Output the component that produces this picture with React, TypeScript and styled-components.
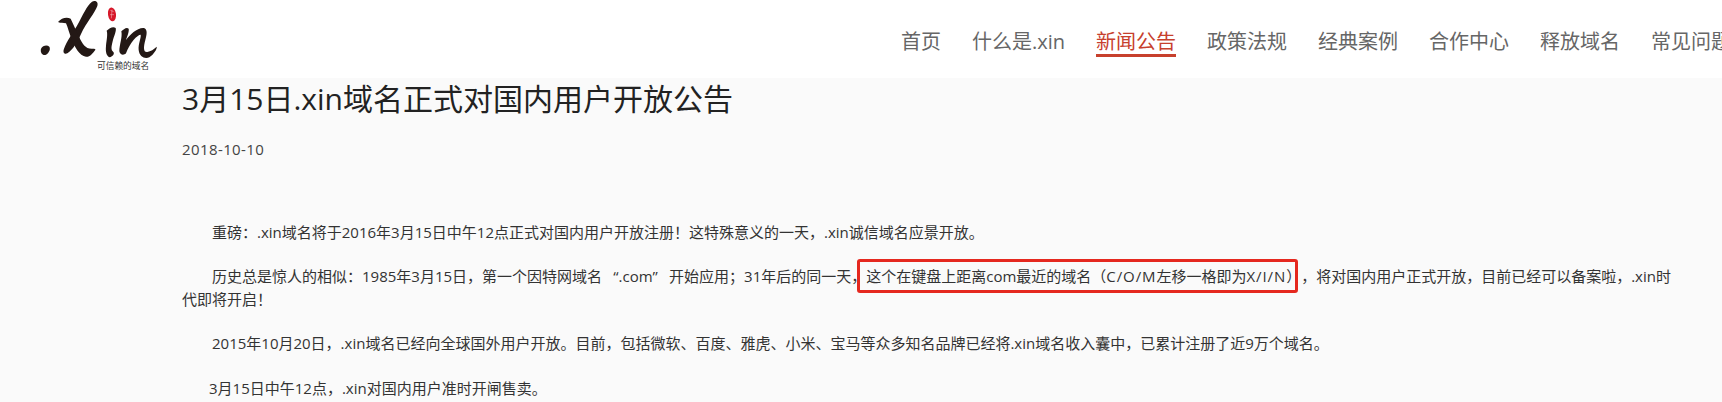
import React from "react";
import styled, { createGlobalStyle } from "styled-components";

const Global = createGlobalStyle`
  html, body { margin: 0; padding: 0; height: 402px; overflow: hidden; background: #fafafa; }
  body { font-family: "Open Sans", "Noto Sans CJK SC", sans-serif; color: #333; text-spacing-trim: space-all; }
`;
const Header = styled.header`
  height: 78px; background: #fff; display: flex; align-items: flex-start; overflow: hidden;
`;
const LogoWrap = styled.div`
  position: relative; width: 140px; height: 75px; margin-left: 30px; flex: none;
`;
const LogoSvg = styled.svg`display: block; width: 140px; height: 75px;`;
const Tagline = styled.span`
  position: absolute; left: 67px; top: 61px; font-size: 8.7px; line-height: 10px; color: #333; white-space: nowrap;
`;
const Nav = styled.nav`
  display: flex; gap: 31px; margin-left: 731px; padding-top: 29px; white-space: nowrap; flex: none;
`;
const NavItem = styled.a<{ $active?: boolean }>`
  font-size: 20px; line-height: 25px; height: 25px; font-weight: 400;
  color: ${p => (p.$active ? "#c7402d" : "#666")};
  border-bottom: ${p => (p.$active ? "3px solid #c7402d" : "none")};
`;
const Main = styled.main`
  padding: 0 45px 0 182px;
`;
const Title = styled.h1`
  margin: 0; padding-top: 1px; font-size: 30px; line-height: 40px; font-weight: 400; color: #222;
`;
const DateLine = styled.div`
  margin-top: 19px; font-size: 15px; line-height: 22.5px; color: #444; letter-spacing: 0.4px;
`;
const Body = styled.div`
  margin-top: 60px; display: flex; flex-direction: column; gap: 22px;
`;
const Para = styled.p<{ $indent?: number }>`
  margin: 0; font-size: 15px; line-height: 22.5px; color: #333;
  text-indent: ${p => p.$indent ?? 30}px;
`;
const Quote = styled.span<{ $open?: boolean }>`
  display: inline-block; width: 16.5px; text-indent: 0;
  text-align: ${p => (p.$open ? "right" : "left")};
`;
const Letters = styled.span`
  letter-spacing: 0.9px;
`;
const Marked = styled.span`
  position: relative;
  &::after {
    content: ""; position: absolute; left: -9px; right: 3px; top: -7px; bottom: -7px;
    border: 3px solid #e5281f; border-radius: 3px;
  }
`;

const INK = "#231815";

export default function App() {
  const items = ["首页", "什么是.xin", "新闻公告", "政策法规", "经典案例", "合作中心", "释放域名", "常见问题"];
  return (
    <>
      <Global />
      <Header>
        <LogoWrap>
          <LogoSvg viewBox="0 0 420 225" aria-hidden="true">
            <path fill={INK} d="M33 146 C38 136 52 134 58 140 C62 146 58 158 48 164 C38 168 30 158 33 146 Z" />
            <path fill={INK} d="M186 5 C196 0 206 6 202 18 C194 40 170 66 152 104 C142 126 130 148 112 160 C102 164 98 156 102 146 C110 124 128 100 146 68 C158 46 170 18 186 5 Z" />
            <path fill={INK} d="M84 66 C94 54 110 50 122 56 C130 72 138 92 148 112 C158 134 168 150 192 146 C196 146 198 148 194 152 C186 162 178 172 168 170 C148 168 134 140 124 116 C118 100 114 84 108 70 C100 68 92 70 84 66 Z" />
            <path fill={INK} d="M230 92 C238 84 250 78 257 84 C260 92 252 108 248 124 C244 140 242 150 250 156 C254 160 250 168 240 172 C230 170 226 156 228 138 C229 122 234 104 230 92 Z" />
            <path fill={INK} d="M274 94 C280 88 290 80 296 86 C298 94 292 108 288 120 C300 104 322 82 342 84 C354 88 350 106 346 120 C340 142 340 158 352 156 C362 154 372 148 380 140 C382 146 372 162 358 172 C344 178 328 170 326 150 C324 132 334 112 332 104 C322 104 300 128 288 160 C280 168 270 164 268 154 C268 134 278 112 274 94 Z" />
            <ellipse cx="246" cy="43" rx="12" ry="21" fill="#d7182a" transform="rotate(-8 246 43)" />
            <path d="M241 31 L251 35 M246 29 L244 55 M240 44 L252 44" stroke="#f6c9cd" strokeWidth="1.5" fill="none" />
          </LogoSvg>
          <Tagline>可信赖的域名</Tagline>
        </LogoWrap>
        <Nav>
          {items.map(t => <NavItem key={t} $active={t === "新闻公告"}>{t}</NavItem>)}
        </Nav>
      </Header>
      <Main>
        <Title>3月15日.xin域名正式对国内用户开放公告</Title>
        <DateLine>2018-10-10</DateLine>
        <Body>
          <Para>重磅：.xin域名将于2016年3月15日中午12点正式对国内用户开放注册！这特殊意义的一天，.xin诚信域名应景开放。</Para>
          <Para>历史总是惊人的相似：1985年3月15日，第一个因特网域名<Quote $open>“</Quote>.com<Quote>”</Quote>开始应用；31年后的同一天，<Marked>这个在键盘上距离com最近的域名（<Letters>C/O/M</Letters>左移一格即为<Letters>X/I/N</Letters>）</Marked>，将对国内用户正式开放，目前已经可以备案啦，.xin时代即将开启！</Para>
          <Para>2015年10月20日，.xin域名已经向全球国外用户开放。目前，包括微软、百度、雅虎、小米、宝马等众多知名品牌已经将.xin域名收入囊中，已累计注册了近9万个域名。</Para>
          <Para $indent={27}>3月15日中午12点，.xin对国内用户准时开闸售卖。</Para>
        </Body>
      </Main>
    </>
  );
}
